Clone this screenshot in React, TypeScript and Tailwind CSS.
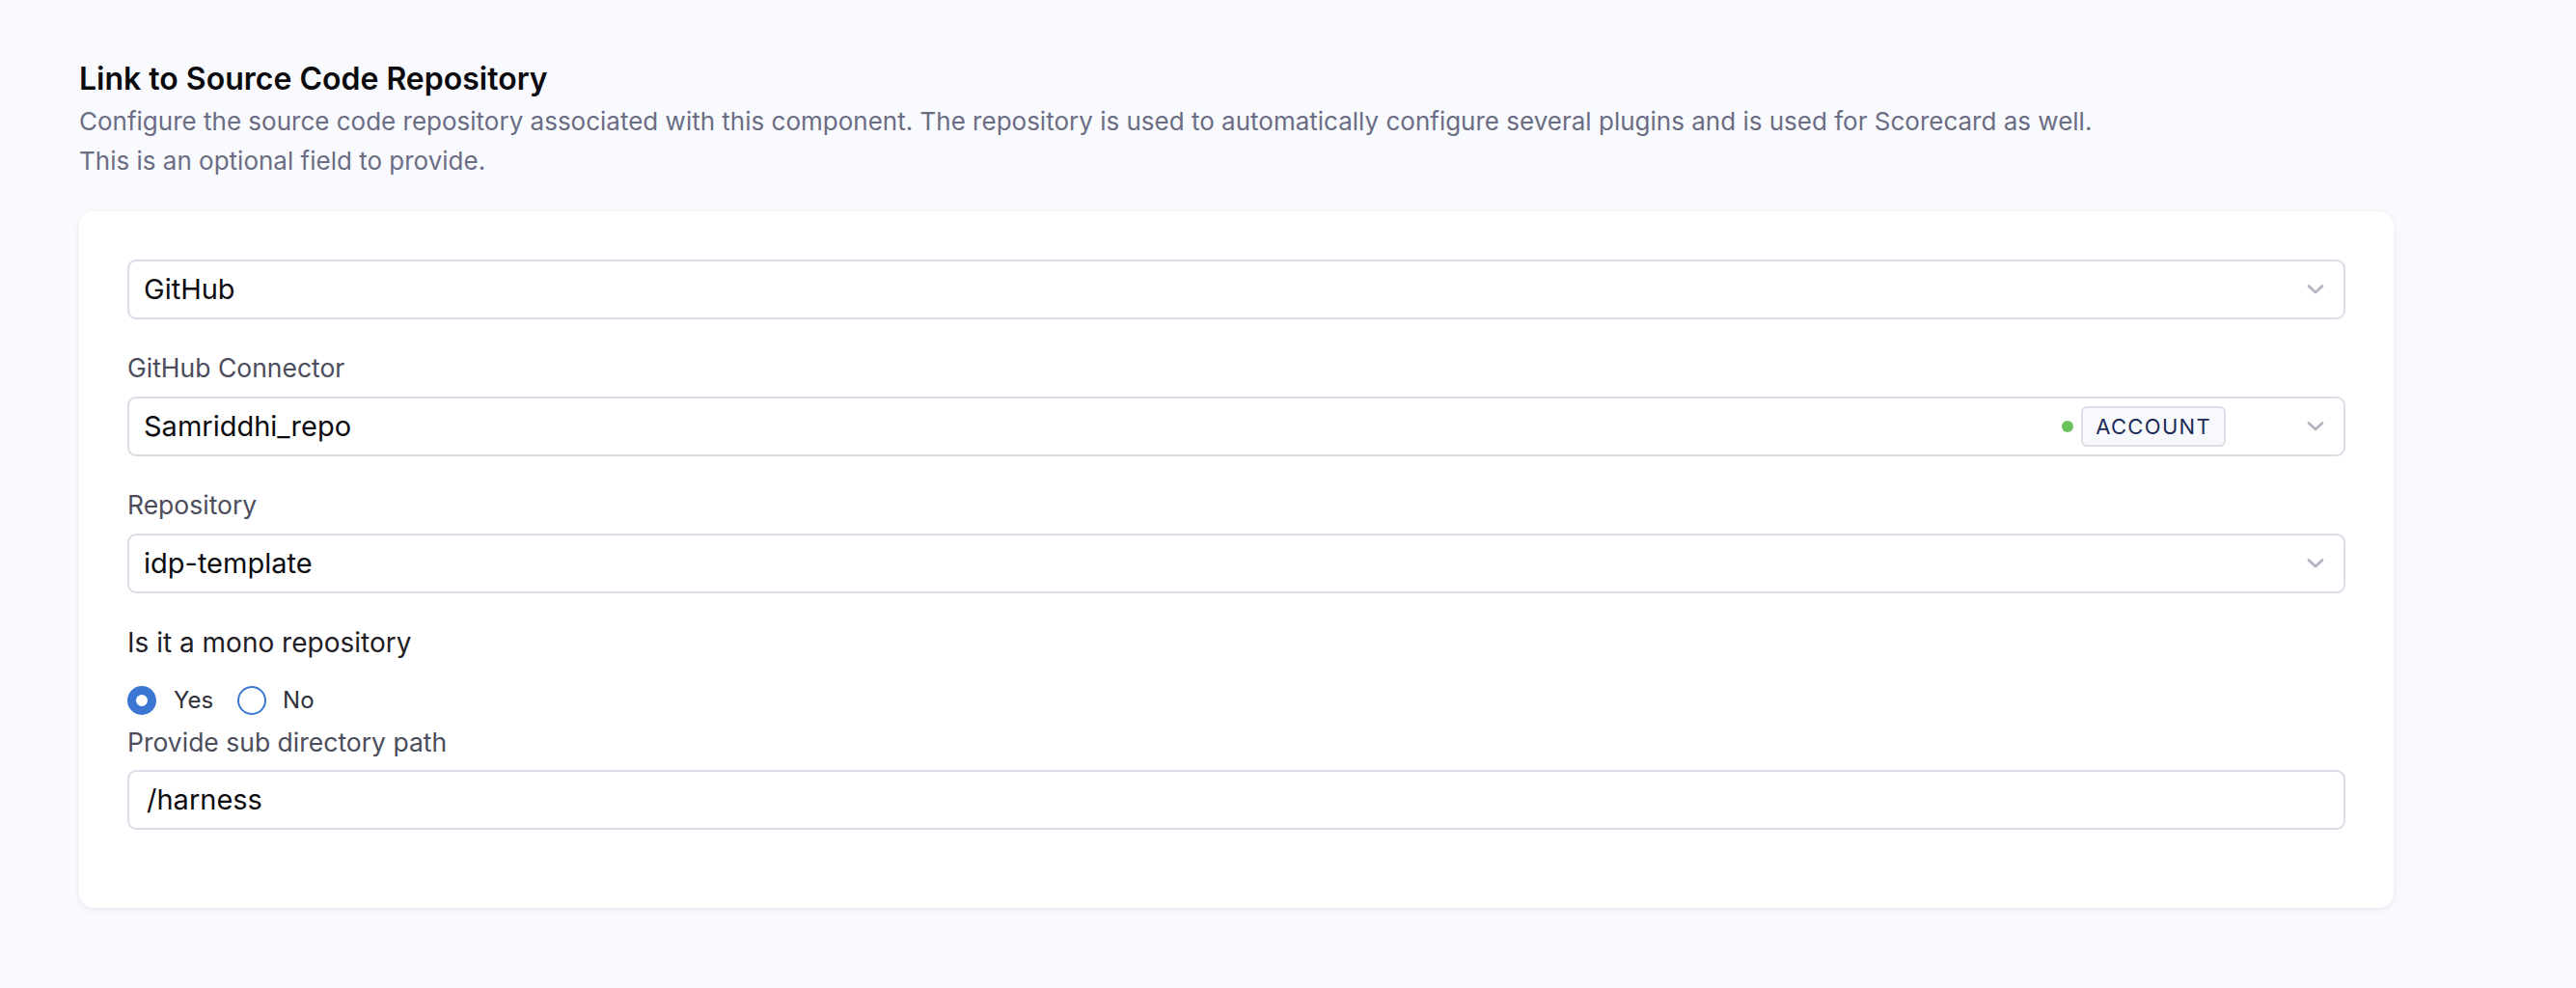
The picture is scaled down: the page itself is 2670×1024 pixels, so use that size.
import React from 'react';

const Chevron: React.FC = () => (
  <svg className="w-[18px] h-[12px] shrink-0" viewBox="0 0 18 12" fill="none">
    <path d="M2 2.5l7 6.5 7-6.5" stroke="#b4b4c2" strokeWidth={2.8} strokeLinecap="round" strokeLinejoin="round" />
  </svg>
);

const SelectBox: React.FC<{ value: string; children?: React.ReactNode }> = ({ value, children }) => (
  <div className="h-[62px] w-full bg-white border-2 border-[#dcdbe6] rounded-[9px] flex items-center pl-[15px] pr-[20px]">
    <span className="flex-1 text-[29px] text-[#0c0c10]">{value}</span>
    {children}
    <Chevron />
  </div>
);

const Label: React.FC<{ text: string }> = ({ text }) => (
  <div className="h-[30px] leading-[30px] text-[26.5px] text-[#4b4c5c] mb-[15px]">{text}</div>
);

export default function App() {
  return (
    <div className="w-full min-h-[1024px] bg-[#f9fafe] pt-[64px] pl-[82px] font-['Inter','Liberation_Sans',sans-serif]">
      {/* Header */}
      <h2 className="text-[32px] leading-[36px] font-semibold text-[#0b0b0e]">Link to Source Code Repository</h2>
      <p className="mt-[5px] text-[26px] leading-[41px] text-[#6b6d84]">
        Configure the source code repository associated with this component. The repository is used to automatically configure several plugins and is used for Scorecard as well.
        <br />
        This is an optional field to provide.
      </p>

      {/* Card */}
      <div className="mt-[32px] w-[2399px] bg-white rounded-[15px] shadow-[0_2px_6px_rgba(40,41,61,0.08)] pt-[50px] px-[50px] pb-[81px]">
        <SelectBox value="GitHub" />

        <div className="mt-[35px]">
          <Label text="GitHub Connector" />
          <SelectBox value="Samriddhi_repo">
            <span className="w-[12px] h-[12px] rounded-full bg-[#6cc35e] mr-[8px]" />
            <span className="h-[42px] px-[13px] flex items-center rounded-[6px] border-2 border-[#dcdde8] bg-[#f8f9fc] text-[22px] tracking-[0.06em] text-[#1c2b57] mr-[84px]">
              ACCOUNT
            </span>
          </SelectBox>
        </div>

        <div className="mt-[35px]">
          <Label text="Repository" />
          <SelectBox value="idp-template" />
        </div>

        <div className="mt-[36px] h-[30px] leading-[30px] text-[28px] text-[#1f2026]">Is it a mono repository</div>

        <div className="mt-[30px] h-[30px] flex items-center text-[24px] text-[#2e2f38]">
          <span className="w-[30px] h-[30px] rounded-full border-[9px] border-[#3a76d2] bg-white" />
          <span className="ml-[18px]">Yes</span>
          <span className="ml-[25px] w-[30px] h-[30px] rounded-full border-2 border-[#3a76d2] bg-white" />
          <span className="ml-[17px]">No</span>
        </div>

        <div className="mt-[13px] h-[30px] leading-[30px] text-[26.5px] text-[#4b4c5c] mb-[14px]">Provide sub directory path</div>
        <div className="h-[62px] w-full bg-white border-2 border-[#dcdbe6] rounded-[9px] flex items-center pl-[18px]">
          <span className="text-[29px] text-[#0c0c10]">/harness</span>
        </div>
      </div>
    </div>
  );
}
